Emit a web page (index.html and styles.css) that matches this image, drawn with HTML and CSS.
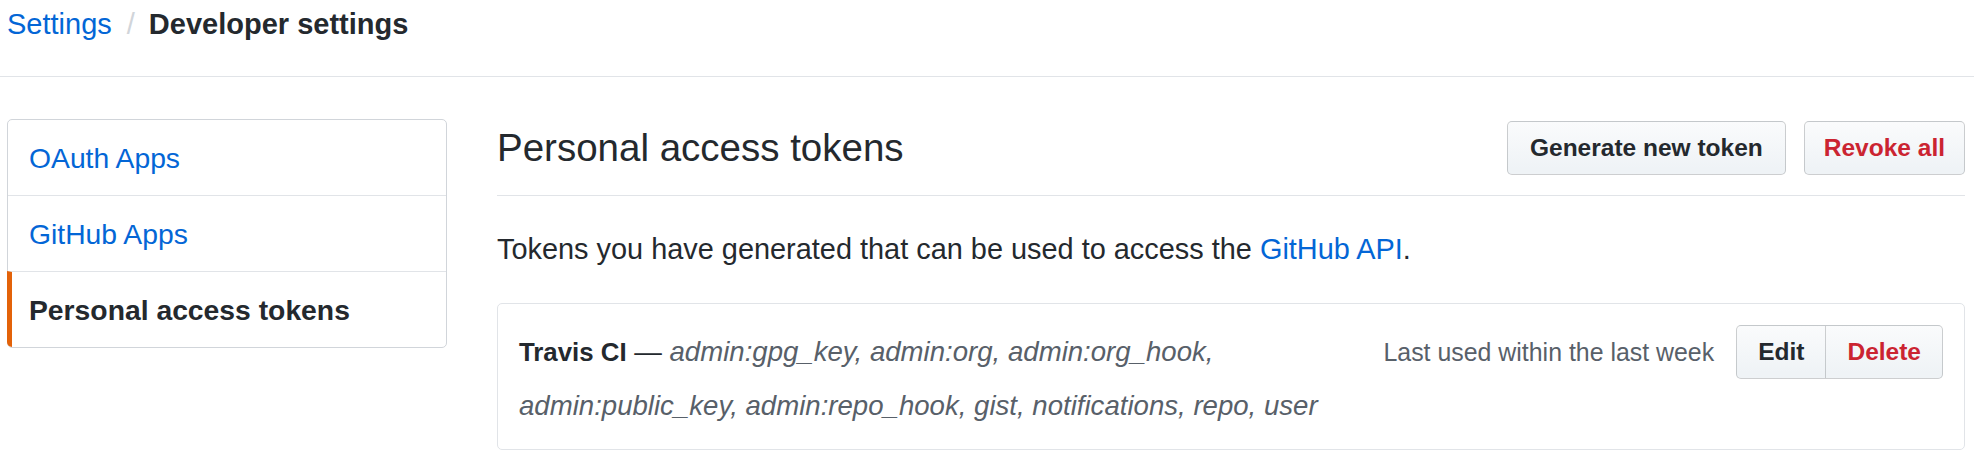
FILE: index.html
```html
<!DOCTYPE html>
<html lang="en">
<head>
<meta charset="utf-8">
<title>Personal access tokens</title>
<link rel="stylesheet" href="styles.css">
</head>
<body>
<header class="topbar">
  <nav class="crumbs">
    <a class="crumb-link" href="#">Settings</a><span class="crumb-sep">/</span><strong class="crumb-current">Developer settings</strong>
  </nav>
</header>
<div class="layout">
  <nav class="menu">
    <a class="menu-item" href="#">OAuth Apps</a>
    <a class="menu-item" href="#">GitHub Apps</a>
    <a class="menu-item selected" href="#">Personal access tokens</a>
  </nav>
  <main class="content">
    <div class="subhead">
      <h2 class="subhead-title">Personal access tokens</h2>
      <div class="actions">
        <button class="btn">Generate new token</button>
        <button class="btn btn-danger btn-narrow">Revoke all</button>
      </div>
    </div>
    <p class="intro">Tokens you have generated that can be used to access the <a class="link" href="#">GitHub API</a>.</p>
    <div class="box">
      <div class="token-row">
        <div class="token-desc"><strong class="token-name">Travis CI</strong> — <em class="token-scopes">admin:gpg_key, admin:org, admin:org_hook, admin:public_key, admin:repo_hook, gist, notifications, repo, user</em></div>
        <div class="token-meta">
          <span class="last-used">Last used within the last week</span>
          <div class="btn-group">
            <button class="btn btn-group-item">Edit</button><button class="btn btn-group-item btn-danger">Delete</button>
          </div>
        </div>
      </div>
    </div>
  </main>
</div>
</body>
</html>
```
FILE: styles.css
```css
* { box-sizing: border-box; }

html, body {
  margin: 0;
  padding: 0;
  background: #ffffff;
}

body {
  font-family: "Liberation Sans", Arial, sans-serif;
  color: #24292e;
  font-size: 28px;
}

a { text-decoration: none; }

.topbar {
  padding: 4px 9px 32px 7px;
  border-bottom: 1px solid #e1e4e8;
}

.crumbs {
  display: flex;
  align-items: center;
  font-size: 29px;
  line-height: 40px;
}

.crumb-link { color: #0366d6; }

.crumb-sep {
  color: #d1d5da;
  margin: 0 14px 0 15px;
}

.crumb-current { font-weight: 700; color: #24292e; }

.layout {
  display: flex;
  align-items: flex-start;
  gap: 50px;
  padding: 42px 9px 0 7px;
}

.menu {
  flex: 0 0 440px;
  display: flex;
  flex-direction: column;
  border: 1px solid #d1d5da;
  border-radius: 5px;
}

.menu-item {
  display: block;
  font-size: 28.3px;
  line-height: 35px;
  padding: 21px 20px 19px 21px;
  color: #0366d6;
  border-top: 1px solid #e1e4e8;
}

.menu-item:first-child { border-top: 0; }

.menu-item.selected {
  margin-left: -1px;
  padding-left: 17px;
  border-left: 5px solid #e36209;
  border-bottom-left-radius: 5px;
  color: #24292e;
  font-weight: 700;
}

.content {
  flex: 1;
  min-width: 0;
}

.subhead {
  display: flex;
  align-items: center;
  justify-content: space-between;
  padding: 2px 0 20px;
  border-bottom: 1px solid #e1e4e8;
}

.subhead-title {
  margin: 0;
  font-size: 38.5px;
  font-weight: 400;
  line-height: 48px;
}

.actions {
  display: flex;
  gap: 18px;
}

.btn {
  font-family: "Liberation Sans", Arial, sans-serif;
  font-size: 24.5px;
  font-weight: 700;
  line-height: 30px;
  height: 54px;
  padding: 0 22px;
  color: #24292e;
  background: linear-gradient(180deg, #fafbfc 0%, #eff3f6 90%);
  border: 1px solid rgba(27, 31, 35, 0.2);
  border-radius: 5px;
  cursor: pointer;
}

.btn-narrow { padding: 0 19px; }

.btn-danger { color: #cb2431; }

.intro {
  margin: 33px 0 34px;
  font-size: 28.9px;
  line-height: 40px;
}

.link { color: #0366d6; }

.box {
  border: 1px solid #e1e4e8;
  border-radius: 5px;
}

.token-row {
  display: flex;
  align-items: flex-start;
  gap: 24px;
  padding: 21px 21px 17px 21px;
}

.token-desc {
  flex: 1;
  min-width: 0;
  font-size: 27.6px;
  line-height: 53px;
}

.token-name { font-weight: 700; color: #24292e; font-size: 25.8px; }

.token-scopes { color: #586069; }

.token-meta {
  display: flex;
  align-items: center;
  gap: 22px;
}

.last-used {
  font-size: 24.9px;
  color: #586069;
  white-space: nowrap;
}

.btn-group { display: flex; }

.btn-group-item { padding: 0 21px; }

.btn-group-item:first-child {
  border-top-right-radius: 0;
  border-bottom-right-radius: 0;
}

.btn-group-item:last-child {
  margin-left: -1px;
  border-top-left-radius: 0;
  border-bottom-left-radius: 0;
}
```
